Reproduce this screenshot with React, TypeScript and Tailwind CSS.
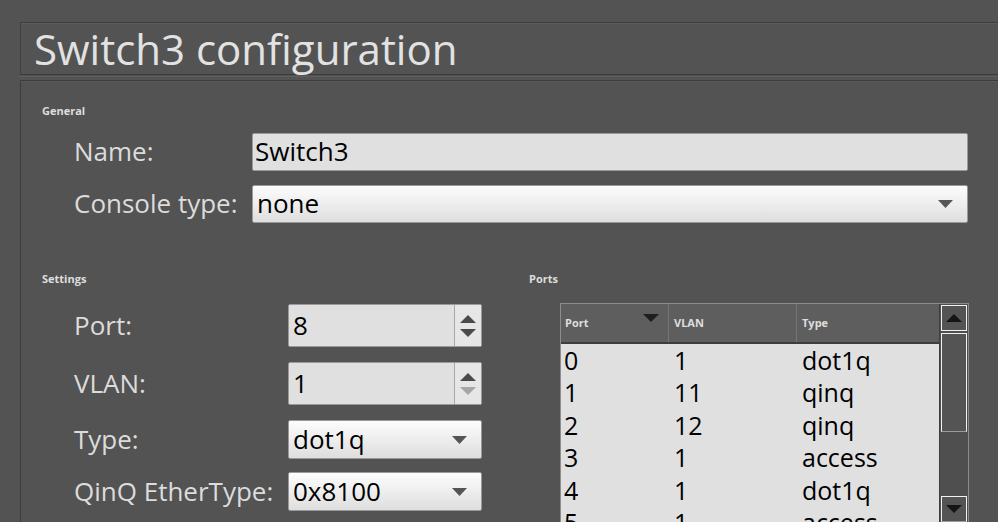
const FONT = { fontFamily: '"Open Sans", "DejaVu Sans", sans-serif' };

const ROWS = [
  { port: "0", vlan: "1", type: "dot1q" },
  { port: "1", vlan: "11", type: "qinq" },
  { port: "2", vlan: "12", type: "qinq" },
  { port: "3", vlan: "1", type: "access" },
  { port: "4", vlan: "1", type: "dot1q" },
  { port: "5", vlan: "1", type: "access" },
];

function Tri({ dir, color = "#4a4a4a", w = 16, h = 9 }: { dir: "up" | "down"; color?: string; w?: number; h?: number }) {
  return (
    <svg width={w} height={h} viewBox={`0 0 ${w} ${h}`}>
      {dir === "up" ? (
        <polygon points={`0,${h} ${w / 2},0 ${w},${h}`} fill={color} />
      ) : (
        <polygon points={`0,0 ${w},0 ${w / 2},${h}`} fill={color} />
      )}
    </svg>
  );
}

function GroupTitle({ children }: { children: React.ReactNode }) {
  return <p className="text-[11px] font-bold leading-none text-[#dedede]">{children}</p>;
}

function Spin({ value, downDisabled }: { value: string; downDisabled?: boolean }) {
  return (
    <div className="flex h-[43px] w-[194px] rounded-[2px] border border-[#9a9a9a] bg-[#e0e0e0]">
      <div className="flex flex-1 items-center pl-[4px] text-[26px] text-black">{value}</div>
      <div className="flex w-[27px] flex-col items-center justify-center gap-[6px] border-l border-[#a8a8a8] bg-[#e6e6e6]">
        <Tri dir="up" w={16} h={8} />
        <Tri dir="down" w={16} h={8} color={downDisabled ? "#a6a6a6" : "#4a4a4a"} />
      </div>
    </div>
  );
}

function Select({ value, className }: { value: string; className: string }) {
  return (
    <div
      className={`flex items-center justify-between rounded-[2px] border border-[#9a9a9a] bg-gradient-to-b from-[#fdfdfd] to-[#dedede] pl-[4px] pr-[14px] text-[26px] text-black ${className}`}
    >
      <span>{value}</span>
      <Tri dir="down" w={15} h={8} color="#555555" />
    </div>
  );
}

export default function App() {
  return (
    <div style={FONT} className="h-[522px] w-[998px] overflow-hidden bg-[#535353] pl-[20px] pt-[22px] text-[#dcdcdc]">
      {/* title */}
      <div className="flex h-[53px] w-[1000px] items-center border-b border-l border-t border-b-[#3c3c3c] border-l-[#404040] border-t-[#3c3c3c] pl-[13px] shadow-[inset_0_1px_0_#5c5c5c]">
        <h1 className="text-[42px] leading-none text-[#e2e2e2]">Switch3 configuration</h1>
      </div>
      <div className="mt-[1px] h-[4px] w-[1000px] border-t border-[#5e5e5e]" />

      {/* body */}
      <div className="h-[460px] w-[1000px] border-l border-t border-[#3c3c3c] pl-[21px] pt-[24px] shadow-[inset_0_1px_0_#5a5a5a]">
        <GroupTitle>General</GroupTitle>
        <div className="mt-[16px] flex flex-col gap-[13px] pl-[32px]">
          <div className="flex items-center">
            <span className="w-[178px] text-[26px]">Name:</span>
            <div className="flex h-[38px] w-[716px] items-center rounded-[2px] border border-[#9a9a9a] bg-[#e0e0e0] pl-[2px] text-[26px] text-black">
              Switch3
            </div>
          </div>
          <div className="flex items-center">
            <span className="w-[178px] text-[26px]">Console type:</span>
            <Select value="none" className="h-[38px] w-[716px]" />
          </div>
        </div>

        <div className="mt-[50px] flex">
          {/* settings */}
          <div className="w-[487px]">
            <GroupTitle>Settings</GroupTitle>
            <div className="mt-[20px] flex flex-col gap-[15px] pl-[32px]">
              <div className="flex items-center">
                <span className="w-[214px] text-[26px]">Port:</span>
                <Spin value="8" />
              </div>
              <div className="flex items-center">
                <span className="w-[214px] text-[26px]">VLAN:</span>
                <Spin value="1" downDisabled />
              </div>
              <div className="flex items-center">
                <span className="w-[214px] text-[26px]">Type:</span>
                <Select value="dot1q" className="h-[39px] w-[194px]" />
              </div>
              <div className="-mt-[2px] flex items-center">
                <span className="w-[214px] text-[26px]">QinQ EtherType:</span>
                <Select value="0x8100" className="h-[39px] w-[194px]" />
              </div>
            </div>
          </div>

          {/* ports */}
          <div>
            <GroupTitle>Ports</GroupTitle>
            <div className="ml-[31px] mt-[19px] flex h-[220px] w-[409px] border border-[#8c8c8c] bg-[#515151]">
              <div className="flex w-[378px] flex-col overflow-hidden">
                <div className="flex h-[40px] shrink-0 border-b-2 border-[#3d3d3d] bg-[#5e5e5e] text-[11px] font-bold text-[#dedede]">
                  <div className="relative flex w-[108px] items-center border-r border-[#767676] pl-[4px]">
                    Port
                    <span className="absolute right-[9px] top-[10px]">
                      <Tri dir="down" w={16} h={8} color="#1e1e1e" />
                    </span>
                  </div>
                  <div className="flex w-[128px] items-center border-r border-[#767676] pl-[5px]">VLAN</div>
                  <div className="flex flex-1 items-center pl-[5px]">Type</div>
                </div>
                <div className="flex-1 bg-[#e0e0e0] text-[25px] text-black">
                  {ROWS.map((r) => (
                    <div key={r.port} className="flex h-[32.5px] items-center">
                      <span className="w-[108px] pl-[3px]">{r.port}</span>
                      <span className="w-[128px] pl-[5px]">{r.vlan}</span>
                      <span className="pl-[5px]">{r.type}</span>
                    </div>
                  ))}
                </div>
              </div>
              {/* scrollbar */}
              <div className="flex w-[29px] flex-col border-l border-[#3f3f3f] bg-[#4f4f4f] px-[1px] pt-[1px]">
                <div className="flex h-[26px] items-center justify-center border border-[#f2f2f2] bg-[#545454]">
                  <Tri dir="up" w={16} h={8} color="#151515" />
                </div>
                <div className="mt-[2px] h-[99px] border border-[#f2f2f2] border-b-[#9a9a9a] bg-[#545454]" />
                <div className="flex-1" />
                <div className="flex h-[26px] items-center justify-center border border-[#f2f2f2] border-b-[#9a9a9a] bg-[#545454]">
                  <Tri dir="down" w={16} h={8} color="#151515" />
                </div>
              </div>
            </div>
          </div>
        </div>
      </div>
    </div>
  );
}
